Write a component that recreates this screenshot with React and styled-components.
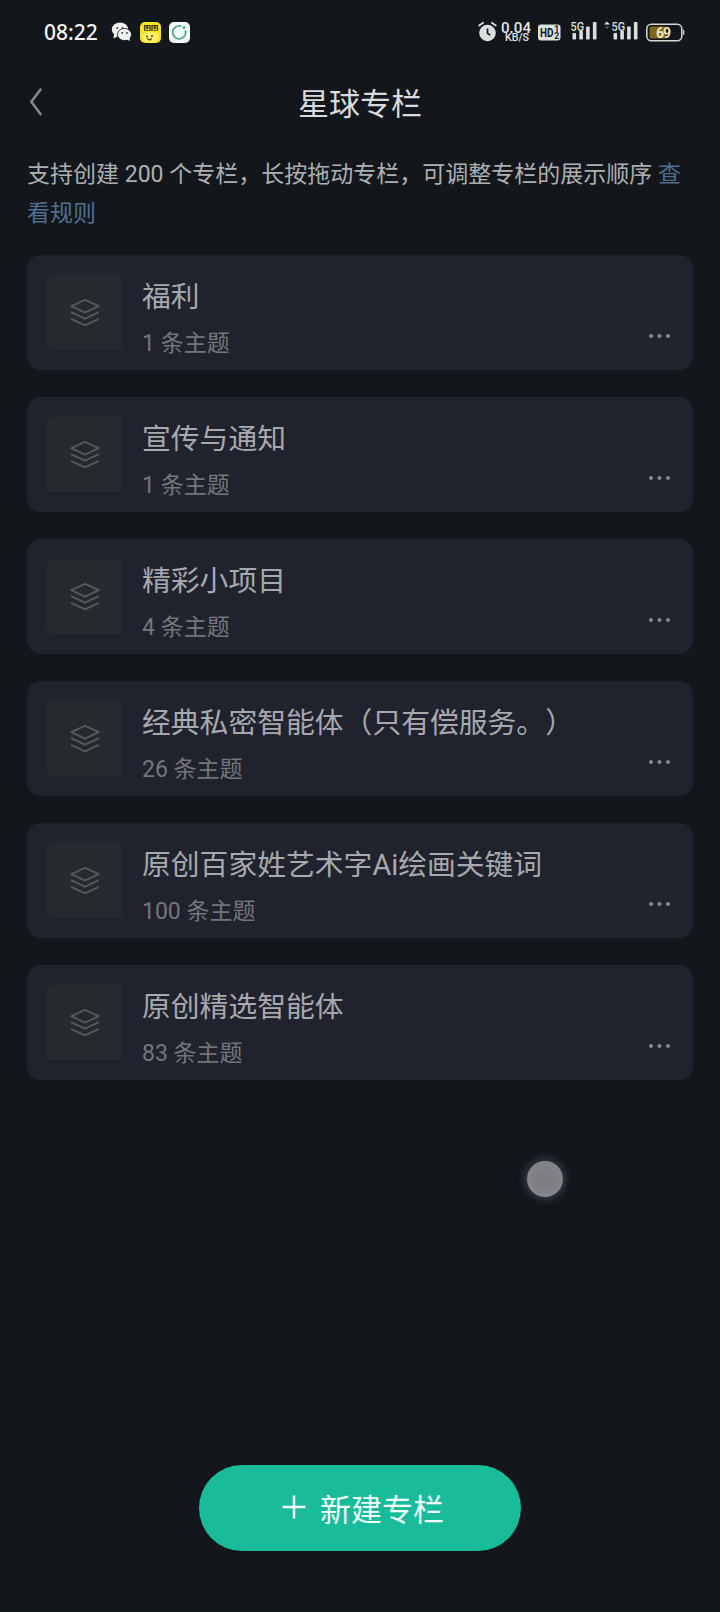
import React from "react";
import styled, { createGlobalStyle } from "styled-components";

const GlobalStyle = createGlobalStyle`
  * {
    box-sizing: border-box;
  }

  body {
    margin: 0;
    background: #13171c;
    font-family: Roboto, "Noto Sans CJK SC", sans-serif;
  }
`;

const Screen = styled.div`
  position: relative;
  display: flex;
  flex-direction: column;
  width: 720px;
  height: 1612px;
  overflow: hidden;
  background: #13171c;
`;

const StatusBar = styled.div`
  display: flex;
  align-items: center;
  justify-content: space-between;
  height: 64px;
  padding: 0 35px 0 44px;
`;

const StatusGroup = styled.div`
  display: flex;
  align-items: center;
`;

const Clock = styled.span`
  width: 67px;
  padding-bottom: 1px;
  font-family: "Noto Sans", sans-serif;
  font-size: 21px;
  font-weight: 500;
  line-height: 24px;
  color: #f1f3f4;
`;

const NavBar = styled.header`
  display: grid;
  grid-template-columns: 60px 1fr 60px;
  align-items: center;
  height: 76px;
`;

const BackButton = styled.button`
  display: flex;
  padding: 0 0 0 28px;
  border: 0;
  background: none;
`;

const NavTitle = styled.h1`
  margin: 0;
  padding-top: 5px;
  font-size: 31px;
  font-weight: 400;
  line-height: 40px;
  text-align: center;
  color: #d9dbde;
`;

const Hint = styled.p`
  margin: 15px 27px 0;
  font-size: 23px;
  line-height: 39px;
  color: #adb0b3;
`;

const RuleLink = styled.a`
  color: #4e6f8f;
`;

const ColumnList = styled.ul`
  display: flex;
  flex-direction: column;
  gap: 27px;
  margin: 22px 27px 0;
  padding: 0;
  list-style: none;
`;

const Card = styled.li`
  display: flex;
  height: 115px;
  padding: 20px 22px 0 20px;
  border-radius: 14px;
  background: #20222d;
`;

const Cover = styled.div`
  display: flex;
  align-items: center;
  justify-content: center;
  width: 75px;
  height: 75px;
  border-radius: 4px;
  background: #26292e;
`;

const CardBody = styled.div`
  flex: 1;
  padding: 1px 0 0 20px;
`;

const CardTitle = styled.h2`
  margin: 0;
  font-size: 28.8px;
  font-weight: 400;
  line-height: 42px;
  text-spacing-trim: space-all;
  color: #a7a9ae;
`;

const CardCount = styled.p`
  margin: 9px 0 0;
  font-size: 23px;
  line-height: 34px;
  color: #74767c;
`;

const MoreButton = styled.button`
  display: flex;
  align-self: flex-start;
  margin-top: 58px;
  padding: 0;
  border: 0;
  background: none;
`;

const Footer = styled.footer`
  display: flex;
  justify-content: center;
  margin-top: auto;
  padding-bottom: 61px;
`;

const CreateButton = styled.button`
  display: flex;
  align-items: center;
  justify-content: center;
  gap: 14px;
  width: 322px;
  height: 86px;
  padding: 0 0 2px 6px;
  border: 0;
  border-radius: 43px;
  background: #19bb9a;
  font-family: inherit;
  font-size: 31px;
  color: #effffb;
`;

// Touch indicator floating over the page
const TouchDot = styled.div`
  position: absolute;
  top: 1161px;
  left: 527px;
  width: 36px;
  height: 36px;
  border-radius: 50%;
  background: radial-gradient(circle, #7c7e80 30%, #8b8d92 100%);
  box-shadow: 0 0 7px 3px rgba(100, 106, 130, 0.4);
`;

const columns = [
  { title: "福利", count: 1 },
  { title: "宣传与通知", count: 1 },
  { title: "精彩小项目", count: 4 },
  { title: "经典私密智能体（只有偿服务。）", count: 26 },
  { title: "原创百家姓艺术字Ai绘画关键词", count: 100 },
  { title: "原创精选智能体", count: 83 },
];

const AppIcons = () => (
  <svg width="80" height="24" viewBox="0 0 80 24">
    <g fill="#eef0f0">
      <ellipse cx="9" cy="9.500" rx="8.200" ry="7" />
      <path d="M3 14l-.5 4.500 5-2.500z" />
      <ellipse cx="13.500" cy="14.500" rx="7" ry="6.100" stroke="#13171c" strokeWidth=".8" />
      <path d="M15 19l4 2-.5-4z" />
    </g>
    <g fill="#3a3e42">
      <circle cx="6.300" cy="8" r="1" />
      <circle cx="11.500" cy="8" r="1" />
      <circle cx="11.200" cy="13" r=".9" />
      <circle cx="16" cy="13" r=".9" />
    </g>
    <rect x="29" y="2" width="21" height="21" rx="5" fill="#f6e527" />
    <ellipse cx="39.500" cy="17" rx="8" ry="5.500" fill="#ffee68" />
    <g fill="none" stroke="#3b3710" strokeWidth="1.300">
      <path d="M33.700 11V5.600h5.300V11M41 11V5.600h5.500V11M35 8h2.600M36.300 5.600V8M42.300 8h3M43.800 5.600V8M35.200 10.400h2M42.800 10.400h2" />
      <path d="M36.500 18.500q2 3 4-.2" />
    </g>
    <circle cx="36" cy="16.500" r=".9" fill="#3b3710" />
    <circle cx="41" cy="16" r=".9" fill="#3b3710" />
    <rect x="58" y="2" width="21" height="21" rx="5" fill="#f3fbf8" />
    <path
      d="M69.500 6a6.500 6.500 0 1 0 5 5"
      fill="none"
      stroke="#58a58e"
      strokeWidth="1.800"
      strokeLinecap="round"
    />
    <circle cx="73" cy="7.500" r="1.500" fill="#58a58e" />
  </svg>
);

const SignalBars = ({ x }) => (
  <g fill="#dcdfdf">
    <rect x={x} y="13" width="3.600" height="6.500" rx=".8" />
    <rect x={x + 6.8} y="11" width="3.600" height="8.500" rx=".8" />
    <rect x={x + 13.6} y="6.500" width="3.600" height="13" rx=".8" />
    <rect x={x + 20.4} y="2" width="3.600" height="17.500" rx=".8" />
  </g>
);

// Alarm, network speed, HD voice, two SIM signals and battery
const SystemIcons = () => (
  <svg
    width="207"
    height="24"
    viewBox="0 0 207 24"
    fontFamily="Roboto, sans-serif"
    fontWeight="500"
  >
    <circle cx="9.500" cy="13" r="8.300" fill="#dcdfdf" />
    <path
      d="M1.200 5.500L5.200 2.800M17.800 5.500L13.800 2.800"
      stroke="#dcdfdf"
      strokeWidth="1.800"
      strokeLinecap="round"
    />
    <path d="M9.500 8.500v4.800l2.800 1.800" fill="none" stroke="#13171c" strokeWidth="1.700" />
    <g fill="#e3e5e6">
      <text x="23" y="12.800" fontSize="15" textLength="30" lengthAdjust="spacingAndGlyphs">0.04</text>
      <text x="27" y="21.300" fontSize="11.500" textLength="24" lengthAdjust="spacingAndGlyphs">KB/S</text>
    </g>
    <rect x="60" y="4.500" width="22.500" height="16" rx="3" fill="#dcdfdf" />
    <g fill="#13171c" fontWeight="700">
      <text x="62" y="17" fontSize="12.500" textLength="13.500" lengthAdjust="spacingAndGlyphs">HD</text>
      <text x="76.300" y="12.200" fontSize="8.500">1</text>
      <text x="76.300" y="19.300" fontSize="8.500">2</text>
    </g>
    <g fill="#dcdfdf">
      <text x="92.500" y="10.800" fontSize="12" textLength="13.500" lengthAdjust="spacingAndGlyphs">5G</text>
      <text x="133.500" y="10.800" fontSize="12" textLength="13.500" lengthAdjust="spacingAndGlyphs">5G</text>
      <path d="M126 4.500l3-3 3 3z" />
      <path d="M126.500 6.500l2.500 2.500 2.500-2.500z" opacity=".35" />
    </g>
    <SignalBars x={94.5} />
    <SignalBars x={135.5} />
    <rect x="168.800" y="4.300" width="35" height="16.500" rx="4.500" fill="none" stroke="#d8d9d3" strokeWidth="1.500" />
    <path d="M173 6.500h14.500V18.500H173q-1.500 0-1.500-1.500V8q0-1.500 1.500-1.500z" fill="#80681b" />
    <path d="M205 9.500q1.500 0 1.500 1.500v2.500q0 1.500-1.500 1.500z" fill="#b8bab8" />
    <text x="178" y="17.500" fontSize="14" fontWeight="700" fill="#f1e7bc" textLength="15">69</text>
  </svg>
);

const BackIcon = () => (
  <svg width="16" height="30" viewBox="0 0 16 30" fill="none">
    <path
      d="M12.500 2.500L3.300 14.700l9.200 12.400"
      stroke="#85888b"
      strokeWidth="2.600"
      strokeLinecap="round"
      strokeLinejoin="round"
    />
  </svg>
);

const LayersIcon = () => (
  <svg
    width="32"
    height="30"
    viewBox="0 0 32 30"
    fill="none"
    stroke="#56595f"
    strokeWidth="1.900"
    strokeLinejoin="round"
  >
    <path d="M16 1.800l13.700 6.400L16 14.600 2.300 8.200z" />
    <path d="M2 14.200l14 6.500 14-6.500" />
    <path d="M2 20.800l14 6.500 14-6.500" />
  </svg>
);

const DotsIcon = () => (
  <svg width="22" height="6" viewBox="0 0 22 6" fill="#85878e">
    <circle cx="2" cy="3" r="2" />
    <circle cx="10.500" cy="3" r="2" />
    <circle cx="19" cy="3" r="2" />
  </svg>
);

const PlusIcon = () => (
  <svg width="24" height="24" viewBox="0 0 24 24">
    <path d="M12 .5v23M.5 12h23" stroke="#effffb" strokeWidth="2.500" />
  </svg>
);

const ColumnCard = ({ title, count }) => (
  <Card>
    <Cover>
      <LayersIcon />
    </Cover>
    <CardBody>
      <CardTitle>{title}</CardTitle>
      <CardCount>{count} 条主题</CardCount>
    </CardBody>
    <MoreButton>
      <DotsIcon />
    </MoreButton>
  </Card>
);

const App = () => {
  return (
    <Screen lang="zh-CN">
      <GlobalStyle />
      <StatusBar>
        <StatusGroup>
          <Clock>08:22</Clock>
          <AppIcons />
        </StatusGroup>
        <StatusGroup>
          <SystemIcons />
        </StatusGroup>
      </StatusBar>
      <NavBar>
        <BackButton>
          <BackIcon />
        </BackButton>
        <NavTitle>星球专栏</NavTitle>
      </NavBar>
      <Hint>
        支持创建 200 个专栏，长按拖动专栏，可调整专栏的展示顺序{" "}
        <RuleLink>查看规则</RuleLink>
      </Hint>
      <ColumnList>
        {columns.map((column) => (
          <ColumnCard key={column.title} {...column} />
        ))}
      </ColumnList>
      <Footer>
        <CreateButton>
          <PlusIcon />
          新建专栏
        </CreateButton>
      </Footer>
      <TouchDot />
    </Screen>
  );
};

export default App;
